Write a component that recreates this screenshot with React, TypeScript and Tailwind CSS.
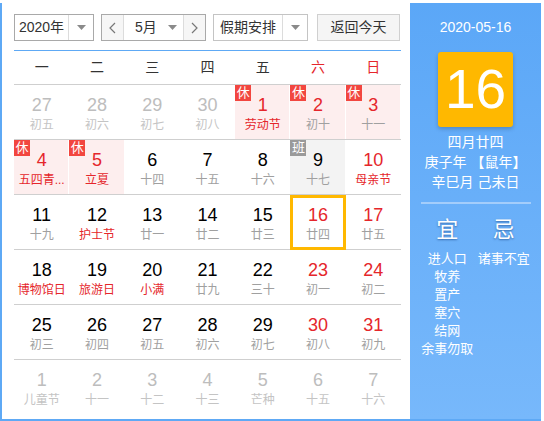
import React from 'react';

// Одна ячейка календаря
interface DayCell {
  day: number;
  lunar: string;
  other?: boolean; // день соседнего месяца
  red?: boolean; // красное число (выходной)
  festival?: boolean; // праздник — красная подпись
  rest?: boolean; // 休
  work?: boolean; // 班
  selected?: boolean;
}

const FONT = { fontFamily: '"Liberation Sans", "Noto Sans CJK SC", sans-serif' };

const weeks: DayCell[][] = [
  [
    { day: 27, lunar: '初五', other: true },
    { day: 28, lunar: '初六', other: true },
    { day: 29, lunar: '初七', other: true },
    { day: 30, lunar: '初八', other: true },
    { day: 1, lunar: '劳动节', red: true, festival: true, rest: true },
    { day: 2, lunar: '初十', red: true, rest: true },
    { day: 3, lunar: '十一', red: true, rest: true },
  ],
  [
    { day: 4, lunar: '五四青...', red: true, festival: true, rest: true },
    { day: 5, lunar: '立夏', red: true, festival: true, rest: true },
    { day: 6, lunar: '十四' },
    { day: 7, lunar: '十五' },
    { day: 8, lunar: '十六' },
    { day: 9, lunar: '十七', work: true },
    { day: 10, lunar: '母亲节', red: true, festival: true },
  ],
  [
    { day: 11, lunar: '十九' },
    { day: 12, lunar: '护士节', festival: true },
    { day: 13, lunar: '廿一' },
    { day: 14, lunar: '廿二' },
    { day: 15, lunar: '廿三' },
    { day: 16, lunar: '廿四', red: true, selected: true },
    { day: 17, lunar: '廿五', red: true },
  ],
  [
    { day: 18, lunar: '博物馆日', festival: true },
    { day: 19, lunar: '旅游日', festival: true },
    { day: 20, lunar: '小满', festival: true },
    { day: 21, lunar: '廿九' },
    { day: 22, lunar: '三十' },
    { day: 23, lunar: '初一', red: true },
    { day: 24, lunar: '初二', red: true },
  ],
  [
    { day: 25, lunar: '初三' },
    { day: 26, lunar: '初四' },
    { day: 27, lunar: '初五' },
    { day: 28, lunar: '初六' },
    { day: 29, lunar: '初七' },
    { day: 30, lunar: '初八', red: true },
    { day: 31, lunar: '初九', red: true },
  ],
  [
    { day: 1, lunar: '儿童节', other: true },
    { day: 2, lunar: '十一', other: true },
    { day: 3, lunar: '十二', other: true },
    { day: 4, lunar: '十三', other: true },
    { day: 5, lunar: '芒种', other: true },
    { day: 6, lunar: '十五', other: true },
    { day: 7, lunar: '十六', other: true },
  ],
];

const weekDays = ['一', '二', '三', '四', '五', '六', '日'];

const yiList = ['进人口', '牧养', '置产', '塞穴', '结网', '余事勿取'];

// Маленький треугольник селекта
const Caret: React.FC = () => (
  <svg width="9" height="5" viewBox="0 0 9 5">
    <path d="M0 0 H9 L4.5 5 Z" fill="#8a8a8a" />
  </svg>
);

const Chevron: React.FC<{ dir: 'left' | 'right' }> = ({ dir }) => (
  <svg width="7" height="12" viewBox="0 0 7 12">
    <path
      d={dir === 'left' ? 'M6 1 L1 6 L6 11' : 'M1 1 L6 6 L1 11'}
      fill="none"
      stroke="#777"
      strokeWidth="1.2"
    />
  </svg>
);

const Cell: React.FC<{ cell: DayCell }> = ({ cell }) => {
  let numColor = 'text-black';
  if (cell.other) numColor = 'text-[#bdbdbd]';
  else if (cell.red) numColor = 'text-[#e5262b]';

  let lunarColor = 'text-[#a0a0a0]';
  if (cell.other) lunarColor = 'text-[#c4c4c4]';
  else if (cell.festival) lunarColor = 'text-[#e5262b]';

  let bg = '';
  if (cell.rest) bg = 'bg-[#fdeeee]';
  if (cell.work) bg = 'bg-[#f3f3f3]';

  return (
    <div className="relative h-[54px]">
      <div className={`absolute inset-y-0 left-0 right-px ${bg}`} />
      {cell.rest && (
        <div className="absolute left-0 top-0 w-4 h-4 bg-[#f2463f] text-white text-[13px] leading-4 text-center">休</div>
      )}
      {cell.work && (
        <div className="absolute left-0 top-0 w-4 h-4 bg-[#9a9a9a] text-white text-[13px] leading-4 text-center">班</div>
      )}
      {cell.selected && (
        <div className="absolute left-0 right-0 top-0 bottom-[-1px] border-[3px] border-[#ffb800]" />
      )}
      <div className="relative flex flex-col items-center pt-[10px]">
        <div className={`text-[18px] leading-5 ${numColor}`}>{cell.day}</div>
        <div className={`text-[12px] leading-4 mt-[2px] whitespace-nowrap ${lunarColor}`}>{cell.lunar}</div>
      </div>
    </div>
  );
};

const App: React.FC = () => {
  return (
    <div className="w-[544px] h-[421px] bg-white pt-[3px]" style={FONT}>
      <div className="w-[541px] h-[418px] flex border-l-2 border-b-2 border-[#5ea9f5]">
        {/* Левая часть: панель управления и сетка */}
        <div className="w-[408px] pl-3 pr-[9px] pt-[11px]">
          <div className="flex items-center h-[27px] text-[14px] text-[#333]">
            <div className="flex h-full w-[80px] border border-[#a9a9a9] bg-white">
              <div className="flex-1 flex items-center justify-center border-r border-[#dcdcdc]">2020年</div>
              <div className="w-6 flex items-center justify-center">
                <Caret />
              </div>
            </div>
            <div className="flex h-full w-[105px] ml-[7px] border border-[#a9a9a9] bg-white">
              <div className="w-[22px] flex items-center justify-center bg-[#f6f6f6] border-r border-[#dcdcdc]">
                <Chevron dir="left" />
              </div>
              <div className="flex-1 flex items-center pl-[11px] pr-[6px]">
                <span className="flex-1">5月</span>
                <Caret />
              </div>
              <div className="w-[22px] flex items-center justify-center bg-[#f6f6f6] border-l border-[#dcdcdc]">
                <Chevron dir="right" />
              </div>
            </div>
            <div className="flex h-full w-[95px] ml-[7px] border border-[#c4c4c4] bg-white">
              <div className="flex-1 flex items-center justify-center border-r border-[#dcdcdc]">假期安排</div>
              <div className="w-6 flex items-center justify-center">
                <Caret />
              </div>
            </div>
            <div className="flex h-full w-[83px] ml-[9px] items-center justify-center border border-[#d0d0d0] bg-[#f5f5f5]">
              返回今天
            </div>
          </div>

          <div className="mt-[9px] border-t border-[#5ea9f5]">
            <div className="grid grid-cols-7 h-[34px] items-center border-b border-[#cfcfcf] text-[14px]">
              {weekDays.map((w, i) => (
                <div key={w} className={`text-center ${i >= 5 ? 'text-[#e5262b]' : 'text-[#333]'}`}>
                  {w}
                </div>
              ))}
            </div>
            {weeks.map((week, wi) => (
              <div
                key={wi}
                className={`grid grid-cols-7 ${wi < weeks.length - 1 ? 'border-b border-[#cfcfcf]' : ''}`}
              >
                {week.map((cell, ci) => (
                  <Cell key={ci} cell={cell} />
                ))}
              </div>
            ))}
          </div>
        </div>

        {/* Правая панель: выбранная дата */}
        <div className="w-[131px] h-full bg-gradient-to-b from-[#5ba7f7] to-[#77b8fb] text-white flex flex-col items-center pt-[16px]">
          <div className="text-[14px] leading-4">2020-05-16</div>
          <div className="mt-[17px] w-[75px] h-[75px] rounded-[3px] bg-[#ffb800] shadow-[0_2px_4px_rgba(0,0,0,0.2)] flex items-center justify-center">
            <span className="text-[55px] leading-none">16</span>
          </div>
          <div className="mt-[5px] text-[14px] leading-5 text-center">
            <div>四月廿四</div>
            <div>庚子年 【鼠年】</div>
            <div>辛巳月 己未日</div>
          </div>
          <div className="mt-[10px] w-[110px] h-[2px] bg-[#a3cdfb]" />
          <div className="w-full px-[9px] grid grid-cols-2 mt-[14px]">
            <div className="text-center text-[22px] leading-6 [text-shadow:0_1px_2px_rgba(0,40,100,0.5)]">宜</div>
            <div className="text-center text-[22px] leading-6 [text-shadow:0_1px_2px_rgba(0,40,100,0.5)]">忌</div>
            <div className="mt-[8px] flex flex-col items-center text-[13px] leading-[18px] whitespace-nowrap">
              {yiList.map((t) => (
                <div key={t}>{t}</div>
              ))}
            </div>
            <div className="mt-[8px] flex flex-col items-center text-[13px] leading-[18px] whitespace-nowrap">
              <div>诸事不宜</div>
            </div>
          </div>
        </div>
      </div>
    </div>
  );
};

export default App;
